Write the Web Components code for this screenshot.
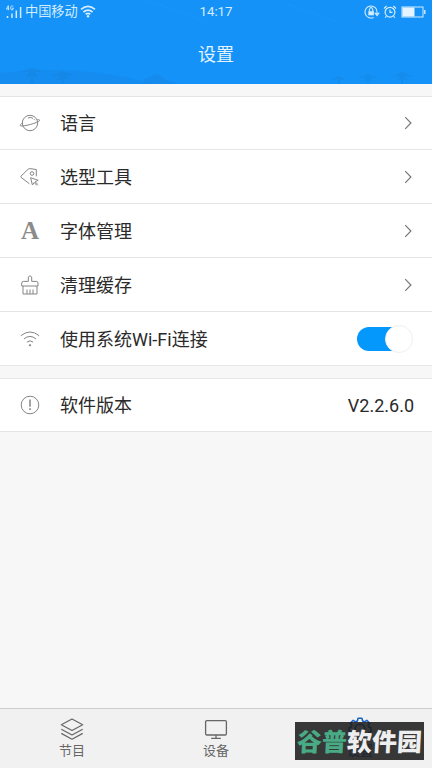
<!DOCTYPE html>
<html lang="zh-CN">
<head>
<meta charset="utf-8">
<title>设置</title>
<style>
html,body{margin:0;height:100%}
body{font-family:Roboto,"Noto Sans CJK SC",sans-serif;background:#f7f7f7;color:#2b2b2b;overflow:hidden}
</style>
</head>
<body>
<settings-page></settings-page>
<script>
const define = (name, html) => customElements.define(name, class extends HTMLElement {
  constructor() {
    super();
    const t = document.createElement('template');
    t.innerHTML = html;
    this.attachShadow({mode: 'open'}).append(t.content.cloneNode(true));
  }
});

define('status-bar', `
<style>
:host{display:grid;grid-template-columns:1fr auto 1fr;align-items:center;height:22px;padding:0 6px 0 6px;font-size:13px;line-height:22px;color:#d3ecff}
.left,.right{display:flex;align-items:center}
.right{justify-content:flex-end}
.time{font-size:13.3px}
.carrier{margin:0 2px 0 3px;padding-top:1px;font-size:13.2px}
svg{display:block;fill:none;stroke:currentColor}
</style>
<div class="left">
  <svg width="16" height="14" viewBox="0 0 16 14"><path d="M2.2 0.6 L0.4 4 H3.2 M2.4 0.6V5.2 M7.3 1.6Q6.7.8 5.7.9Q4.6 1.2 4.6 3Q4.7 5 6 5Q7.3 4.9 7.3 3.2H6" stroke-width=".9"/><path d="M1.5 11v2M6 8.5V13M10.3 5.5V13M14.6 2V13" stroke-width="1.5"/></svg>
  <span class="carrier">中国移动</span>
  <svg width="16" height="13" viewBox="0 0 16 13"><path d="M1 4.4Q8-1.6 15 4.4M3.4 7Q8 3.2 12.6 7M5.7 9.3Q8 7.6 10.3 9.3" stroke-width="1.7"/><circle cx="8" cy="11.2" r="1.2" fill="currentColor" stroke="none"/></svg>
</div>
<span class="time">14:17</span>
<div class="right">
  <svg width="16" height="14" viewBox="0 0 16 14"><path d="M9.6 12.4A6 6 0 1 1 13 7.5M11.2 8.2h3.6L13 10.6Z" stroke-width="1.1"/><rect x="4.3" y="6.2" width="5.6" height="4.1" fill="currentColor" stroke="none"/><path d="M5.4 6.5V4.8Q7-.1 8.8 4.8V6.5" stroke-width="1.1"/></svg>
  <svg style="margin-left:3px" width="14" height="14" viewBox="0 0 14 14"><circle cx="7" cy="7.2" r="4.9" stroke-width="1.2"/><path d="M7 4.4v3h2.5M1 3.5 3.6 1M13 3.5 10.4 1M3.2 11.2 2.2 12.8M10.8 11.2l1 1.6" stroke-width="1.2"/></svg>
  <svg style="margin-left:4px" width="25" height="12" viewBox="0 0 25 12"><rect x="1" y="1" width="21" height="10"/><path d="M1.5 1.5H13.5V10.5H1.5Z" fill="#e5f4ff" stroke="none"/><path d="M23.8 4V8" stroke-width="1.4"/></svg>
</div>`);

define('page-header', `
<style>
:host{display:grid;grid-template:22px 62px/100%;height:84px;background:#1492f7;position:relative;overflow:hidden}
.scene{position:absolute;left:0;bottom:0;display:block}
status-bar,h1{position:relative}
h1{margin:0;text-align:center;font-size:18px;font-weight:400;line-height:65px;color:#e3f3ff}
</style>
<svg class="scene" width="432" height="84" viewBox="0 0 432 84">
  <path d="M0 73Q80 64 146 82L160 84H0Z" fill="#168aeb" opacity=".7"/>
  <path d="M144 79Q150 78 154 74Q160 75 166 80L178 84H144Z" fill="#1686e4" opacity=".5"/>
  <path d="M21 72 32 67 42 72 34 71 38 77 33 75V84H31V75L26 77 30 71ZM52 76 63 71 75 76 66 75 68 80 64 79V84H62V79L57 80 60 75Z" fill="#187fd5" opacity=".35"/>
  <path d="M331 80 339 76 346 80 340 79V84H338V79ZM359 78 368 74 377 78 369 77 373 81H369V84H367V81H363L367 77ZM392 77 402 72 413 77 403 76 408 80 403 79V84H401V79L396 80 401 76Z" fill="#187fd5" opacity=".35"/>
  <path d="M8 0 72 23M147 0 212 24M288 4 340 23" stroke="#249af8" opacity=".4" fill="none"/>
</svg>
<status-bar></status-bar><h1><slot></slot></h1>`);

define('setting-row', `
<style>
:host{display:flex;align-items:center;height:53px;padding:0 18px 0 19px;background:#fff;border-bottom:1px solid #e5e5e5;font-size:18px;color:#2a2a2a}
:host(:first-of-type){height:52px}
.icon{width:22px;height:22px;margin-right:19px;color:#858585}
.label{flex:1;padding-top:2px;line-height:26px}
</style>
<span class="icon"><slot name="icon"></slot></span><span class="label"><slot></slot></span><slot name="end"></slot>`);

define('chevron-right', `
<style>:host{display:block}svg{display:block}</style>
<svg width="10" height="14" viewBox="0 0 10 14"><path d="M1.2 1.2 6.9 7 1.2 12.8" fill="none" stroke="#777" stroke-width="1.2"/></svg>`);

define('toggle-switch', `
<style>
:host{display:flex;justify-content:flex-end;align-items:center;box-sizing:border-box;width:56px;height:24px;margin-right:1px;border-radius:12px;background:linear-gradient(90deg,#0497fc 38px,transparent 38px)}
i{box-sizing:border-box;width:28px;height:28px;flex:none;border-radius:50%;background:#fff;border:1px solid #efefef}
</style><i></i>`);

const icons = {
  planet: '<circle cx="11" cy="11" r="7.7"/><path d="M4 10.8C1.6 12 .8 13.2 1.5 13.8C3.5 15 19.6 10.7 20.5 8.6C20.9 7.6 19.8 7.5 18.2 7.8M9 6Q12 4.8 14 6.3M15 7.2l.8.9"/>',
  tag: '<path d="M10.3 17.7 2 11.3Q1.4 10.8 2 10.2L9 3.3Q9.7 2.6 10.7 2.6L17.3 3.5V10.3"/><circle cx="13" cy="7.5" r="1.8"/><path d="m11.6 11.7 7.6 2.6-3.1 1.5 3.1 3M11.6 11.7l1.8 7.3 1.8-2.6 2.6 3"/>',
  brush: '<path d="M2.7 12V9.1Q2.7 7.4 4.4 7.4H9.3V3Q11 .6 12.7 3V7.4H17.3Q19 7.4 19 9.1V12ZM4 12V20H18V12M8 15.5V20M11 15.5V20M14 15.5V20"/>',
  wifi: '<path d="M1.8 7.7Q11 .3 20.2 7.7M4.9 11Q11 5.8 17.1 11M7.9 14.1Q11 11.5 14.1 14.1"/><circle cx="11" cy="17.3" r=".7" fill="currentColor"/>',
  info: '<circle cx="11" cy="11" r="8.8"/><path d="M11 5.5v7.3" stroke-width="1.5"/><path d="M11 14.2v1.7" stroke-width="1.6"/>',
  layers: '<path d="M11 1 21.7 6.8 11 12.5.3 6.8ZM.3 11.2 11 17 21.7 11.2M.3 15.4 11 21.2 21.7 15.4"/>',
  monitor: '<rect x=".6" y="2.6" width="20.8" height="14.4" rx="1.2"/><path d="M11 17v3.3M6.2 20.3h9.6"/>',
  gear: '<path d="M9 .3h4l.6 2.7 1.8.8L17.8 2.3l2.8 2.8-1.5 2.4.8 1.8 2.1.5v4l-2.1.5-.8 1.8 1.5 2.4-2.8 2.8-2.4-1.5-1.8.8L13 22H9l-.6-2.2-1.8-.8-2.4 1.5-2.8-2.8 1.5-2.4-.8-1.8L0 13V9.8l2.1-.5.8-1.8L1.4 5.1 4.2 2.3 6.6 3.8l1.8-.8Z"/><circle cx="11" cy="11" r="4.8"/>'
};
customElements.define('line-icon', class extends HTMLElement {
  constructor() { super(); this.attachShadow({mode: 'open'}); }
  connectedCallback() {
    this.shadowRoot.innerHTML = `<style>:host{display:block;width:22px;height:22px}svg{display:block;overflow:visible}</style>
    <svg width="22" height="22" viewBox="0 0 22 22" fill="none" stroke="currentColor" stroke-width="${this.getAttribute('weight') || 1}" stroke-linejoin="round">${icons[this.getAttribute('name')]}</svg>`;
  }
});

define('letter-icon', `
<style>:host{display:block;width:22px;height:22px;text-align:center;font:bold 25px/22px "Liberation Serif",serif;color:#8b8b8b}</style><slot></slot>`);

define('tab-item', `
<style>
:host{display:flex;flex-direction:column;align-items:center;padding-top:9px;font-size:13px;line-height:18px;color:#666}
:host([active]){color:#1762c4}
span{margin-top:2px}
</style>
<slot name="icon"></slot><span><slot></slot></span>`);

define('tab-bar', `
<style>:host{display:grid;grid-template-columns:repeat(3,1fr);box-sizing:border-box;height:60px;border-top:1px solid #ccc;background:#f1f1f1}</style><slot></slot>`);

define('site-badge', `
<style>
:host{position:absolute;left:295px;top:722px;width:129px;height:38px;box-sizing:border-box;display:flex;align-items:center;justify-content:center;background:rgba(28,28,28,.88);font:900 25px/36px "Noto Sans CJK SC",sans-serif;color:#eee;white-space:nowrap}
div{display:flex;margin-top:-2px;transform:skewX(-3deg)}
b{font-weight:900;color:#48ab85}
</style><div><b><slot name="lead"></slot></b><slot></slot></div>`);

define('settings-page', `
<style>
:host{display:flex;flex-direction:column;width:432px;height:768px;position:relative;background:#f7f7f7}
main{flex:1;padding-top:12px}
section{border-top:1px solid #e5e5e5}
section+section{margin-top:12px}
</style>
<page-header>设置</page-header>
<main>
<section>
<setting-row><line-icon slot="icon" name="planet"></line-icon>语言<chevron-right slot="end"></chevron-right></setting-row>
<setting-row><line-icon slot="icon" name="tag"></line-icon>选型工具<chevron-right slot="end"></chevron-right></setting-row>
<setting-row><letter-icon slot="icon">A</letter-icon>字体管理<chevron-right slot="end"></chevron-right></setting-row>
<setting-row><line-icon slot="icon" name="brush"></line-icon>清理缓存<chevron-right slot="end"></chevron-right></setting-row>
<setting-row><line-icon slot="icon" name="wifi"></line-icon>使用系统Wi-Fi连接<toggle-switch slot="end"></toggle-switch></setting-row>
</section>
<section>
<setting-row><line-icon slot="icon" name="info"></line-icon>软件版本<span slot="end">V2.2.6.0</span></setting-row>
</section>
</main>
<tab-bar>
<tab-item><line-icon slot="icon" name="layers" weight="1.2"></line-icon>节目</tab-item>
<tab-item><line-icon slot="icon" name="monitor" weight="1.3"></line-icon>设备</tab-item>
<tab-item active><line-icon slot="icon" name="gear" weight="1.5"></line-icon>设置</tab-item>
</tab-bar>
<site-badge><span slot="lead">谷普</span>软件园</site-badge>`);
</script>
</body>
</html>
